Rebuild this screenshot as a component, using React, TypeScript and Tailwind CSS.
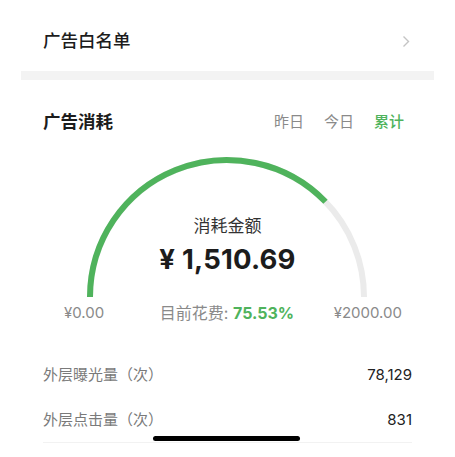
const GREEN = "#4fb35c";

const stats = [
  { label: "外层曝光量（次）", value: "78,129" },
  { label: "外层点击量（次）", value: "831" },
];

function Gauge({ percent }: { percent: number }) {
  // semicircle, center (227,147), r 137
  const cx = 227;
  const cy = 147;
  const r = 137;
  const a = Math.PI * (1 - percent / 100);
  const ex = cx + r * Math.cos(a);
  const ey = cy - r * Math.sin(a);
  return (
    <svg className="absolute left-0 top-0" width="455" height="160" viewBox="0 0 455 160">
      <path
        d={`M ${cx - r} ${cy} A ${r} ${r} 0 0 1 ${cx + r} ${cy}`}
        fill="none"
        stroke="#ebebeb"
        strokeWidth="6"
      />
      <path
        d={`M ${cx - r} ${cy} A ${r} ${r} 0 0 1 ${ex} ${ey}`}
        fill="none"
        stroke={GREEN}
        strokeWidth="6"
      />
    </svg>
  );
}

export default function App() {
  return (
    <div
      className="relative w-[455px] h-[457px] bg-white overflow-hidden"
      style={{ fontFamily: 'Inter, "Noto Sans CJK SC", sans-serif' }}
    >
      <div className="flex items-center justify-between px-[43px] pt-[28px] h-[71px] pb-[17px]">
        <span className="text-[17.5px] leading-[26px] font-medium text-[#1c1c1c]">广告白名单</span>
        <svg width="8" height="13" viewBox="0 0 8 13" className="mr-[2px]">
          <path d="M1.5 1.5 L6.5 6.5 L1.5 11.5" fill="none" stroke="#c4c4c4" strokeWidth="1.4" />
        </svg>
      </div>
      <div className="mx-[21px] h-[9px] bg-[#f3f3f3]" />

      <div className="flex items-center justify-between px-[43px] pt-[30px]">
        <span className="text-[17.5px] leading-6 font-bold text-[#1c1c1c]">广告消耗</span>
        <div className="flex gap-5 text-[15px] leading-6 mr-[8px]">
          <span className="text-[#8a8a8a]">昨日</span>
          <span className="text-[#8a8a8a]">今日</span>
          <span className="font-medium" style={{ color: GREEN }}>累计</span>
        </div>
      </div>

      <div className="relative mt-[16px] h-[176px]">
        <Gauge percent={75.53} />
        <div className="relative flex flex-col items-center pt-[64px]">
          <span className="text-[17px] leading-6 text-[#333]">消耗金额</span>
          <span className="mt-[3px] text-[27.5px] leading-9 font-bold text-[#1c1c1c] tracking-[0.2px]">
            ¥ 1,510.69
          </span>
        </div>
        <div className="relative flex items-center justify-between pl-[64px] pr-[53px] mt-[26px] text-[15px] leading-5 text-[#8a8a8a]">
          <span>¥0.00</span>
          <span className="ml-[16px] text-[16px]">
            目前花费:{" "}
            <span className="font-bold" style={{ color: GREEN }}>75.53%</span>
          </span>
          <span>¥2000.00</span>
        </div>
      </div>

      <div className="px-[43px] mt-[38px]">
        {stats.map((s, i) => (
          <div
            key={s.label}
            className={[
              "flex items-center justify-between text-[15px] leading-[22px]",
              i === 0 ? "pb-[23px]" : "pb-[11px] border-b border-[#f2f2f2]",
            ].join(" ")}
          >
            <span className="text-[#7a7a7a]">{s.label}</span>
            <span className="text-[#222]">{s.value}</span>
          </div>
        ))}
      </div>

      <div className="absolute left-[153px] top-[436px] w-[147px] h-[5px] rounded-full bg-black" />
    </div>
  );
}
